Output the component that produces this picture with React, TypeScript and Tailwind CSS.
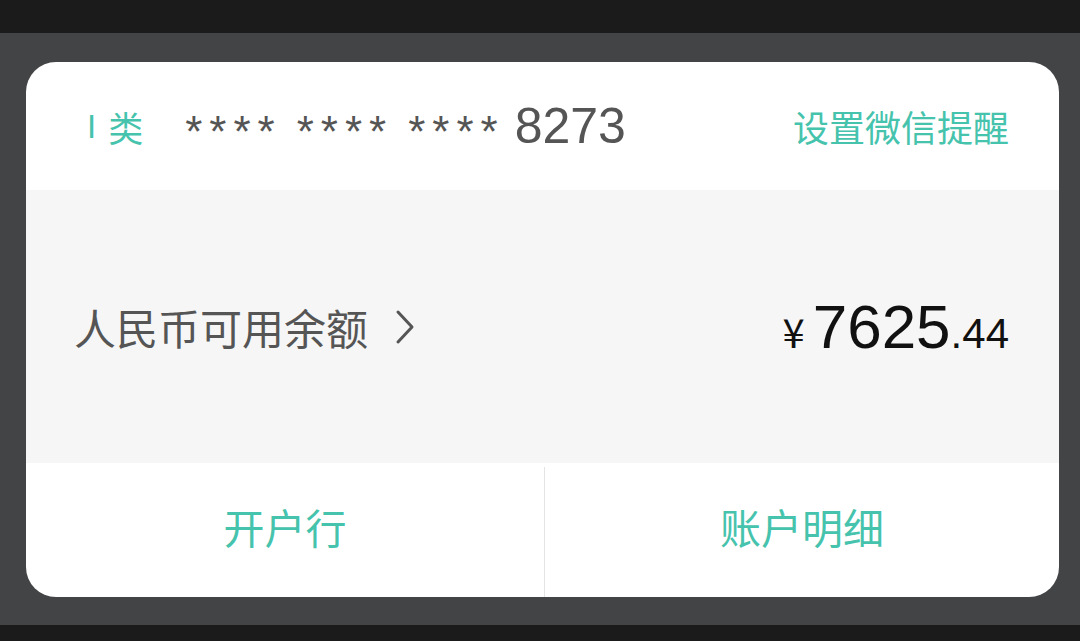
export default function App() {
  const cjk = { fontFamily: '"Noto Sans CJK SC", "Noto Sans", sans-serif' };
  const stars = "****";
  return (
    <div className="w-[1080px] h-[641px] bg-[#1b1b1b] flex flex-col overflow-hidden" style={cjk}>
      <div className="h-[33px] bg-[#1b1b1b]" />
      <div className="h-[592px] bg-[#434446] px-[26px] pt-[29px]">
        <div className="w-[1033px] h-[535px] bg-white rounded-[30px] overflow-hidden flex flex-col">
          {/* header */}
          <div className="h-[128px] flex items-center pl-[61px] pr-[50px]">
            <span className="text-[#46c3ad] font-['Liberation_Sans'] text-[33px] leading-none font-light">I</span>
            <span className="ml-[12px] text-[#46c3ad] text-[35px] leading-none">类</span>
            <div className="ml-[42px] flex items-baseline text-[#555] font-['Liberation_Sans'] leading-none">
              {[0, 1, 2].map((g) => (
                <span
                  key={g}
                  className={`text-[44px] tracking-[7px] translate-y-[4px] ${g === 2 ? "mr-[10px]" : "mr-[15px]"}`}
                >
                  {stars}
                </span>
              ))}
              <span className="text-[50px]">8273</span>
            </div>
            <span className="ml-auto text-[#46c3ad] text-[36px] leading-none">设置微信提醒</span>
          </div>
          {/* balance */}
          <div className="h-[273px] bg-[#f6f6f6] flex items-center pl-[48px] pr-[50px]">
            <span className="text-[#555] text-[42px] leading-none">人民币可用余额</span>
            <svg className="ml-[26px]" width="22" height="36" viewBox="0 0 22 36" fill="none">
              <path d="M4 3 L18 18 L4 33" stroke="#555" strokeWidth="3" strokeLinecap="round" strokeLinejoin="round" />
            </svg>
            <div className="ml-auto flex items-baseline text-[#111] font-['Liberation_Sans'] leading-none">
              <span className="text-[40px] mr-[8px]" style={cjk}>¥</span>
              <span className="text-[62px]">7625</span>
              <span className="text-[42px]">.44</span>
            </div>
          </div>
          {/* actions */}
          <div className="flex-1 flex">
            <div className="w-[518px] flex items-center justify-center text-[#46c3ad] text-[41px] leading-none pb-[8px]">开户行</div>
            <div className="w-px bg-[#e4e4e4] mt-[4px]" />
            <div className="flex-1 flex items-center justify-center text-[#46c3ad] text-[41px] leading-none pb-[8px]">账户明细</div>
          </div>
        </div>
      </div>
      <div className="flex-1 bg-[#1b1b1b]" />
    </div>
  );
}
